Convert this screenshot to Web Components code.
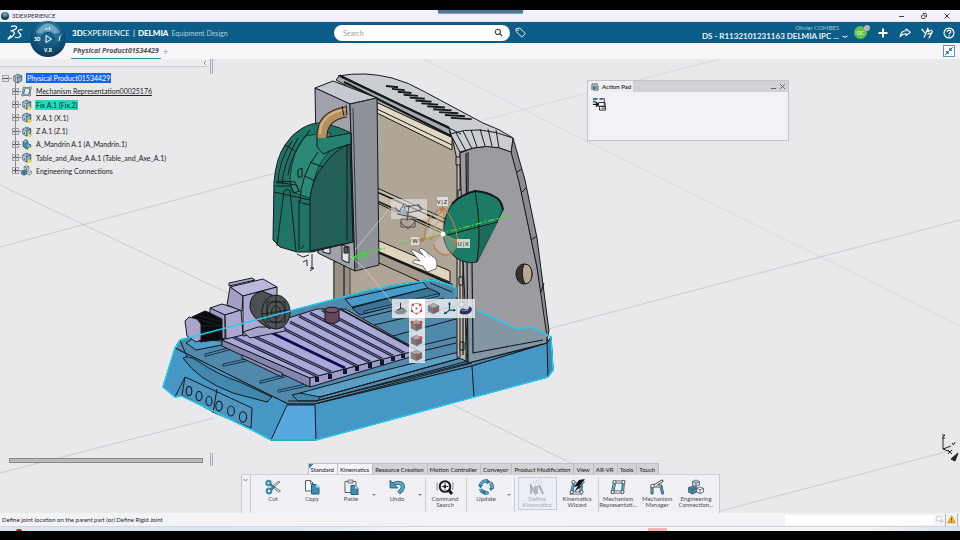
<!DOCTYPE html>
<html lang="en">
<head>
<meta charset="utf-8">
<title>3DEXPERIENCE</title>
<style>
html,body{margin:0;height:100%}
body{font-family:"Lato","Open Sans",sans-serif;background:#000;color:#333}
</style>
</head>
<body>
<app-shell>
  <title-bar slot="title"></title-bar>
  <top-bar slot="top"></top-bar>
  <doc-tabs slot="tabs">Physical Product01534429</doc-tabs>
  <scene-view slot="scene"></scene-view>
  <spec-tree slot="tree">
    <tree-item root selected icon="product">Physical Product01534429</tree-item>
    <tree-item icon="mech" underline>Mechanism Representation00025176</tree-item>
    <tree-item icon="part" active>Fix A.1 (Fix.2)</tree-item>
    <tree-item icon="part">X A.1 (X.1)</tree-item>
    <tree-item icon="part">Z A.1 (Z.1)</tree-item>
    <tree-item icon="body">A_Mandrin A.1 (A_Mandrin.1)</tree-item>
    <tree-item icon="part">Table_and_Axe_A A.1 (Table_and_Axe_A.1)</tree-item>
    <tree-item icon="conn">Engineering Connections</tree-item>
  </spec-tree>
  <context-toolbar slot="float"></context-toolbar>
  <action-pad slot="float"></action-pad>
  <ribbon-bar slot="ribbon"></ribbon-bar>
  <status-bar slot="status">Define joint location on the parent part (or) Define Rigid Joint</status-bar>
</app-shell>

<script>
const define = (name, css, html, init) => {
  const t = document.createElement('template');
  customElements.define(name, class extends HTMLElement {
    constructor() { super(); this.attachShadow({mode: 'open'}); }
    connectedCallback() {
      if (this.shadowRoot.childNodes.length) return;
      t.innerHTML = `<style>*{box-sizing:border-box}button{font:inherit;color:inherit;background:none;border:0;padding:0;margin:0;cursor:pointer}${css}</style>` +
        (typeof html === 'function' ? html(this) : html);
      this.shadowRoot.append(t.content.cloneNode(true));
      if (init) init(this);
    }
  });
};

const cube = (x, y, s, top, l, r) => `<path fill="${top}" d="M${x} ${y - s}l${s} ${s / 2}l${-s} ${s / 2}l${-s} ${-s / 2}z"/><path fill="${l}" d="M${x - s} ${y - s / 2}l${s} ${s / 2}v${s}l${-s} ${-s / 2}z"/><path fill="${r}" d="M${x + s} ${y - s / 2}l${-s} ${s / 2}v${s}l${s} ${-s / 2}z"/>`;
const graybox = dots => `<g stroke="#5b5d61" stroke-width=".5">${cube(8, 8, 6.500, '#a9abaf', '#7b7d81', '#66686c')}</g><g fill="#e5403c">${dots}</g>`;
const partBox = `<path d="M2.500 4.500L8 1.500l6 2.500v7l-6 3.500-5.500-3z" fill="#cfdfe8" stroke="#3f5360" stroke-width="1.100"/><path d="M8 7v7.500l6-3.500V4z" fill="#8fb0c2" stroke="#3f5360"/><path d="M2.500 4.500L8 7l6-3" fill="none" stroke="#3f5360"/><path d="M5 8.500v3.500M7 4.500l3-1.300" stroke="#2f86ab" stroke-width="2"/>`;
const frame = `<g fill="none" stroke="#47515a" stroke-width="3"><path d="M4.500 3h9l-1 10h-10z"/></g><g fill="none" stroke="#dfe9ee" stroke-width="1.300"><path d="M4.500 3h9l-1 10h-10z"/></g><path d="M5 4.500L3.500 12M13 4.500l-.7 7.500" stroke="#3a94b8" stroke-width="2"/><g fill="#fff" stroke="#47515a"><circle cx="4.500" cy="3" r="1.600"/><circle cx="13.500" cy="3" r="1.600"/><circle cx="12.500" cy="13" r="1.600"/><circle cx="2.700" cy="13" r="1.600"/></g>`;
const conn = `<g stroke="#46555f" stroke-width=".8"><path fill="#c6dae4" d="M8 1l3.500 1.500v3.500L8 7.500 4.500 6V2.500z"/><path fill="#3a8bad" d="M4.500 7l4 1.700v4.500l-4 1.800-4-1.800V8.700z"/><path fill="#fff" d="M12 8l3.500 1.400v3.600L12 14.500 8.700 13V9.400z"/><path fill="none" d="M4.500 2.500L8 4l3.500-1.500M8 4v3.500M.5 8.700l4 1.800 4-1.800M4.500 10.500V15M8.700 9.400l3.300 1.500 3.500-1.500M12 10.900v3.600"/></g>`;
const ICONS = {
  product: partBox,
  part: partBox + `<path d="M9 15l2.500-6 1.500 3.500h3l-2 2.500z" fill="#ffe92b" stroke="#a8a516" stroke-width=".5"/>`,
  body: `<path fill="#3a8bad" stroke="#27475a" d="M3 4l4-3 3 2v4l4 1v4l-5 3-6-4z"/><path fill="#a9cfe0" d="M4 4l3-2 2 1-3 2zM8 9l3-1 2 1-3 1.500z"/><path d="M10 15l2.500-5 1 2.500h2.500l-1 2.500z" fill="#ffe92b"/>`,
  mech: frame, conn,
  cut: `<g fill="none" stroke="#3e8db0" stroke-width="2.200"><circle cx="3.500" cy="4" r="2.100"/><circle cx="4" cy="12" r="2.300"/></g><path d="M5.500 5L15.500 12l-2 .8L5 6.500zM6 10.500L15 3l-1.800-.6L5.600 9z" fill="#dfe3e6" stroke="#5e6468" stroke-width=".8"/><path d="M5 5l4 3-3 3" fill="none" stroke="#2f7c9e" stroke-width="1.800"/>`,
  copy: `<path d="M1.500 1.500h5l2.500 2.500v8h-7.500z" fill="#f6f7f8" stroke="#5a5f63"/><path d="M6.500 1.500v3h2.500" fill="none" stroke="#5a5f63" stroke-width=".8"/><path d="M7.500 5.500h4.500l3 3v6.500h-7.500z" fill="#3e8db0" stroke="#23617e"/><path d="M12 5.500v3h3z" fill="#b6dbe9"/>`,
  paste: `<path d="M2 2.500h11v11h-11z" fill="#f0f1f2" stroke="#5a5f63"/><path d="M5 1h5v3h-5z" fill="#d8dadc" stroke="#5a5f63" stroke-width=".8"/><path d="M8 6.500h4l3 3v6h-7z" fill="#3e8db0" stroke="#23617e"/><path d="M12 6.500v3h3z" fill="#b6dbe9"/>`,
  undo: `<path d="M4 5.500c6-4 11-.5 9.500 4-.6 1.800-2 3-4 4.500" fill="none" stroke="#255f7b" stroke-width="4"/><path d="M4 5.500c6-4 11-.5 9.500 4-.6 1.800-2 3-4 4.500" fill="none" stroke="#5aa6c5" stroke-width="2.600"/><path d="M1 1v8h8z" fill="#4596b8" stroke="#255f7b" stroke-width=".8"/>`,
  search: `<circle cx="8" cy="7.500" r="5.300" fill="#fff" stroke="#17191b" stroke-width="2"/><path d="M12 11.500l3 3.500" stroke="#17191b" stroke-width="3"/><circle cx="8" cy="7.500" r="1.700" fill="#222"/><path d="M8 4v1.500M8 9.500V11M4.500 7.500H6M10 7.500h1.500" stroke="#222"/><path d="M1 4H0v7h1M15 4h1v6h-1" fill="none" stroke="#777" stroke-width=".8"/>`,
  update: `<g fill="none" stroke="#24607d" stroke-width="3.400"><path d="M2.500 10a6 6 0 0 0 8 3.500M14 9.500A6 6 0 0 0 12.500 4M9.500 2.200A6 6 0 0 0 2.300 6.500"/></g><g fill="none" stroke="#5aa9c9" stroke-width="2"><path d="M2.500 10a6 6 0 0 0 8 3.500M14 9.500A6 6 0 0 0 12.500 4M9.500 2.200A6 6 0 0 0 2.300 6.500"/></g><path d="M9 0l4 3-4.500 2.500zM7 16l-4-3 4.500-2.500zM0 6h5l-2.500 3.500zM11 9h5l-3 3z" fill="#2f7595"/>`,
  define: `<g stroke="#a9abb0" fill="none"><path d="M2 15V7l4 7V7M8 15V7" stroke-width="1.700"/><path d="M10 6l4 9" stroke-width="2"/><path d="M4 3h1M7 2h1M10 1h1M12 3h1M6 5h1M9 4h1" stroke-width="1.200"/></g>`,
  wizard: frame.replaceAll('M4.500 3h9l-1 10h-10z', 'M4.500 5h8l-1 9h-9z') + `<path d="M16 0l-6 1-5 7 4-1-4 6 8-6-3 .5z" fill="#111"/>`,
  manager: `<g stroke="#4c565e" stroke-width="3" stroke-linecap="round"><path d="M3 7h9M3 7v7M12 7l1.500 7M5 7l8-5"/></g><g stroke="#e9eff2" stroke-width="1.200"><path d="M3 7h9M5 7l8-5"/></g><path d="M3.200 8v6M12.200 8l1.200 6" stroke="#3a94b8" stroke-width="2.200"/><circle cx="3.500" cy="7" r="1.800" fill="#fff" stroke="#4c565e"/>`,
  ground: `<path d="M0 12l5-3h9l2 3-5 3H4z" fill="#8b8d91"/><path d="M8 1v8M8 7l5 2M8 8l-4 2" stroke="#333" stroke-width="1.200" fill="none"/>`,
  circle: `<circle cx="8" cy="8" r="6.200" fill="none" stroke="#9c5f62" stroke-width=".9"/><g fill="#e5403c"><circle cx="3.500" cy="3.500" r="1.600"/><circle cx="12.500" cy="3.500" r="1.600"/><circle cx="2.500" cy="11" r="1.600"/><circle cx="13.500" cy="11" r="1.600"/><circle cx="8" cy="14.200" r="1.300"/></g><circle cx="8" cy="8" r="1.300" fill="#2f62a5"/>`,
  box1: graybox('<circle cx="12" cy="9" r="1.500"/>'),
  box2: graybox('<circle cx="2.500" cy="4" r="1.700"/><circle cx="13.500" cy="4" r="1.700"/><circle cx="8" cy="6.500" r="1.700"/>'),
  box3: graybox('<circle cx="13.500" cy="4.500" r="1.700"/><circle cx="8" cy="8" r="1.700"/>'),
  box4: graybox('<circle cx="8" cy="7" r="1.900"/>'),
  axis: `<path d="M8 1v9M8 10h6M8 10l-5 4" stroke="#0e4b5b" stroke-width="1.500" fill="none"/><path d="M8 0l2 3H6zM16 10l-3-2v4zM1 15.500l1-4 3 2.500z" fill="#0e4b5b"/>`,
  swirl: `<circle cx="3" cy="3" r="3.500" fill="#e6e6e8" stroke="#9a9a9e" stroke-width=".7"/><path d="M1 11c2-4 5-3 7-2s5-1 5-4c3 2 4 5 1 8s-9 3-13 1z" fill="#23315e"/><path d="M3 11c3-2 6 1 9-2" stroke="#8fa5e0" stroke-width="1.200" fill="none"/>`,
  plus: `<path d="M8 2v12M2 8h12" stroke="#fff" stroke-width="2.600"/>`,
  share: `<path d="M9.500 2.500L15 7l-5.500 4.500V9C6 9 3.500 10 1.500 13c.5-4.500 3-8 8-8z" fill="none" stroke="#fff" stroke-width="1.400" stroke-linejoin="round"/>`,
  share2: `<g fill="none" stroke="#fff" stroke-width="1.700"><path d="M1 2.500l4 5.500M9.500 1L4 14M8 6l7-2M15.500 5.500L10.500 15M8.500 9.500l6-1.500M9 3l1.500 4"/></g>`,
  help: `<circle cx="8" cy="8" r="6.600" fill="none" stroke="#fff" stroke-width="1.600"/><path d="M5.700 6.500c0-3 4.600-3 4.600-.3 0 1.800-2.300 1.700-2.300 3.500M8 11v1.500" fill="none" stroke="#fff" stroke-width="1.600"/>`,
  tag: `<path d="M1.500 2.500l5.500-1 8 8.200-5.200 5-8-8z" fill="none" stroke="#fff" stroke-width="1.300" stroke-linejoin="round"/><circle cx="4.500" cy="4.800" r="1.100" fill="#fff"/>`,
  lens: `<circle cx="6.800" cy="6.800" r="4.600" fill="none" stroke="#33383c" stroke-width="1.800"/><path d="M10 10l4.500 4.500" stroke="#33383c" stroke-width="2.200"/>`,
  shrink: `<path d="M8.500 7.500V2.500l2 2L13.500 1.500l1 1L11.500 5.500l2 2zM7.500 8.500v5l-2-2-3 3-1-1 3-3-2-2z" fill="#16557a"/>`,
  pad: `<path d="M1 3h5M8 3h4M1 6h3" stroke="#256a98" stroke-width="1.800"/><path d="M1 9h5M4 6.500L7 9l-3 2.500" stroke="#111" stroke-width="1.400" fill="none"/><g fill="#fff" stroke="#222" stroke-width="1"><path d="M7 7h7v4H7zM8 11h6.500v4H8z"/></g><path d="M13 2v10M10 13h4" stroke="#333"/>`,
  padtab: `<path d="M2 2h12M2 2v12M5 6h9v8H5z" fill="none" stroke="#3a4e5c" stroke-width="1.800"/><path d="M6 8h6v4H6z" fill="#4c8cab"/>`,
  warn: `<path d="M8 1l7 13H1z" fill="#f5b62b" stroke="#b07d12"/><path d="M8 5v5M8 11v2" stroke="#7a4f00" stroke-width="1.500"/>`,
  term: `<path d="M3 3h8v7H3z" fill="#fff" stroke="#b6b6ba"/><path d="M9 12h5v-3" fill="none" stroke="#9d9da2"/>`
};
define('ds-icon', ':host{display:block;width:10px;height:10px;flex:none}svg{display:block;width:100%;height:100%;overflow:visible}',
  el => `<svg viewBox="0 0 16 16" aria-hidden="true">${ICONS[el.getAttribute('name')] || ''}</svg>`);

define('app-shell', `
:host{display:flex;flex-direction:column;min-height:100vh;background:#e9e8eb}
.cap{height:10px;background:#000;flex:none}.foot{height:9px;background:#000;flex:none}
.main{position:relative;flex:1;display:flex;flex-direction:column;justify-content:space-between;align-items:flex-start;min-height:454px}
.scene{position:absolute;inset:0;overflow:hidden}
.tree{position:relative;align-self:flex-start;display:flex;flex-direction:column;height:404px}
.rib{position:relative;align-self:center}
.edge{height:5px;flex:none;background:linear-gradient(90deg,#dbe3ec,#dde7f2 30%,#f5f5f8 45%,#f3f3f6 90%,#d9e2ea);border-top:1px solid #d3d6dc;display:flex;align-items:end}
.edge i{width:6px;height:2px;background:#b02036;border-radius:3px 3px 0 0;margin-left:16px}
.edge b{width:19px;height:3px;background:#efb2b8;margin-left:auto;margin-right:293px}
`, `<div class="cap"></div><slot name="title"></slot><slot name="top"></slot><slot name="tabs"></slot>
<div class="main"><div class="scene"><slot name="scene"></slot><slot name="float"></slot></div>
<div class="tree"><slot name="tree"></slot></div><div class="rib"><slot name="ribbon"></slot></div></div>
<slot name="status"></slot><div class="edge"><i></i><b></b></div><div class="foot"></div>`);

define('title-bar', `
:host{box-sizing:border-box;display:grid;grid-template-columns:1fr auto 1fr;height:12px;flex:none;background:#f1f2fb;font-size:6px;color:#2a2a30;align-items:center;border-bottom:1px solid #dfe1ec}
.n{display:flex;align-items:center;gap:3px;padding-left:1px}.n i{width:8px;height:8px;border-radius:50%;background:radial-gradient(circle at 50% 30%,#8bb7cf,#0b3d5c 60%)}
.notch{width:85px;height:3px;background:#47799d;align-self:start;border-radius:0 0 1px 1px;box-shadow:0 1px 1px #8a9bb0}
.w{display:flex;justify-content:flex-end;gap:15px;padding-right:9px}.w button{width:8px;height:8px}.w svg{display:block;width:8px;height:8px;fill:none;stroke:#444}`,
`<div class="n"><i></i><span>3DEXPERIENCE</span></div><div class="notch"></div><div class="w">
<button aria-label="Minimize"><svg viewBox="0 0 8 8"><path d="M2 4.500h5"/></svg></button>
<button aria-label="Restore"><svg viewBox="0 0 8 8"><rect x="1.500" y="3" width="3.500" height="3.500" rx="1"/><path d="M3 1.500h2.500q1 0 1 1V5"/></svg></button>
<button aria-label="Close"><svg viewBox="0 0 8 8"><path d="M1.500 1.500l5 5M6.500 1.500l-5 5"/></svg></button></div>`);

define('top-bar', `
:host{display:flex;align-items:center;height:21px;flex:none;background:#0b5c86;color:#fff;position:relative;z-index:2;font-family:"Lato",sans-serif}
.logo{width:16px;height:16px;margin-left:7px}.compass{position:absolute;left:29px;top:-2px;width:38px;height:38px}
.brand{margin-left:49px;font-size:7px;display:flex;align-items:baseline;gap:3px;white-space:nowrap}
.brand>span,.brand>b{font-size:8px}.brand b{font-weight:900}.brand em{font-style:normal;color:#b5d0de}
.find{position:absolute;left:334px;width:176px;height:16px;background:#fff;border-radius:8px;display:flex;align-items:center;padding:0 7px 0 9px}
.find input{flex:1;min-width:0;border:0;outline:0;background:none;padding:0;font:7px "Lato",sans-serif;color:#444}.find input::placeholder{color:#9a9ea4}
.find ds-icon{width:9px;height:9px}.tag{position:absolute;left:515px}.tag ds-icon{width:11px;height:11px}
.r{margin-left:auto;display:flex;align-items:center;padding-right:5px}
.who{text-align:right;line-height:1;display:flex;flex-direction:column;gap:1px}.who small{font-size:6px;color:#a9c8d8}.who span{font:bold 8px/1 "Lato",sans-serif;color:#e9f2f6}
.chev{width:6px;height:4px;margin:8px 6px 0 3px}.av{position:relative;width:13px;height:13px;border-radius:50%;background:#5cc44a;font-size:5px;display:grid;place-items:center;margin-right:10px}
.av i{position:absolute;right:-3px;top:-1px;width:6px;height:6px;border-radius:50%;background:#b9b4bf}
.ic{display:flex;gap:10px}.ic ds-icon{width:12px;height:12px}`,
`<svg class="logo" viewBox="0 0 16 16" fill="none" stroke="#fff" stroke-width="1.300"><path d="M4 1.500C7 .7 10.500 1 9.500 3 8.800 4.500 6 5.500 3.500 6M5.500 6.500C9 7 7.500 11 1.500 14c-.8 0 0-1.500 2.500-3.500"/><path d="M15.500 5c-2.500-1-5 .3-4 2s4 3.200 1 5c-1.500.8-3.500.6-4.500 0"/></svg>
<svg class="compass" viewBox="0 0 38 38"><defs><radialGradient id="g" cx=".5" cy=".3" r=".75"><stop offset="0" stop-color="#4f9cc2"/><stop offset=".6" stop-color="#0d5178"/><stop offset="1" stop-color="#0a3654"/></radialGradient></defs><circle cx="19" cy="19" r="18" fill="url(#g)"/><path d="M7 12Q19-5 31 12 26 15 24 12 19 8 14 12 11 15 7 12" fill="#8fbdd4" opacity=".65"/><circle cx="19" cy="19" r="6.500" fill="#18638c" stroke="#0b4468"/><path d="M17 15.500l5.500 3.500-5.500 3.500z" fill="none" stroke="#fff" stroke-width="1"/><g font-family="Open Sans,sans-serif" font-weight="700" font-size="5" fill="#fff"><text x="5" y="21">3D</text><text x="15" y="32">V.R</text></g><path d="M17 8l1 2M21 7l-1 3M30 21l1-5M31.500 15h.8" stroke="#fff"/></svg>
<div class="brand"><span><b>3D</b>EXPERIENCE</span><span>|</span><b>DELMIA</b><em>Equipment Design</em></div>
<label class="find"><input type="search" placeholder="Search" aria-label="Search"><ds-icon name="lens"></ds-icon></label>
<button class="tag" aria-label="Tags"><ds-icon name="tag"></ds-icon></button>
<div class="r"><div class="who"><small>Olivier COMBES</small><span>DS - R1132101231163 DELMIA IPC ...</span></div>
<svg class="chev" viewBox="0 0 6 4" fill="none" stroke="#fff"><path d="M.5 1q2.500 2.500 5 0"/></svg>
<div class="av">OC<i></i></div><div class="ic"><button aria-label="Add"><ds-icon name="plus"></ds-icon></button><button aria-label="Share"><ds-icon name="share"></ds-icon></button><button aria-label="Content"><ds-icon name="share2"></ds-icon></button><button aria-label="Help"><ds-icon name="help"></ds-icon></button></div></div>`);

define('doc-tabs', `
:host{box-sizing:border-box;display:flex;align-items:stretch;height:16px;flex:none;background:#f7f7fa;padding:0 5px 0 71px;font-size:7px}
.t{font:italic 700 7px "Open Sans",sans-serif;color:#505256;border-bottom:1px solid #3183b0;padding:0 2px;white-space:nowrap}
.p{color:#999;font-size:10px;line-height:10px;margin-left:2px}.x{margin:2px 0 2px auto;width:12px;height:12px;border:1px solid #5a93b5;background:#fff;display:grid;place-items:center}`,
`<button class="t"><slot></slot></button><button class="p" aria-label="New tab">+</button><button class="x" aria-label="Collapse"><ds-icon name="shrink"></ds-icon></button>`);

define('spec-tree', `
:host{display:flex;flex-direction:column;flex:1;width:213px;font-size:7px;color:#222}
.h{height:8px;display:flex;justify-content:space-between;border-bottom:1px solid #cdccd1;background:#eeedf0;width:209px;padding-right:2px}
.h svg{width:4px;height:6px;margin-left:auto;margin-top:1px}
.row{display:flex;justify-content:space-between;flex:1}
.list{display:flex;flex-direction:column;justify-content:space-between;height:105px;margin-top:5px}
.bars{width:3px;display:flex;flex-direction:column;justify-content:space-between}.bars i{height:13px;border:solid #aaa9af;border-width:0 1px}.bars i:first-child{margin-top:-8px;height:15px}
.sb{height:5px;margin:-8px 10px 0 9px;background:#bbb;border:1px solid #88888c}`,
`<div class="h"><svg viewBox="0 0 4 6" fill="none" stroke="#777" stroke-width=".8"><path d="M3 1L1 3l2 2"/></svg></div>
<div class="row"><div class="list" role="tree"><slot></slot></div><div class="bars"><i></i><i></i></div></div><div class="sb"></div>`);

define('tree-item', `
:host{display:flex;align-items:center;height:12px;padding-left:12px;position:relative;white-space:nowrap}
:host([root]){padding-left:2px}
:host(:not([root]))::before{content:"";position:absolute;left:15px;top:-8px;height:14px;border-left:1px solid #8b8b90}
.e{position:relative;width:7px;height:7px;background:#e2e1e5;border:1px solid #a2a2a7;display:grid;place-items:center}
.e::before{content:"";grid-area:1/1;width:5px;height:1px;background:#555}:host(:not([root])) .e::after{content:"";grid-area:1/1;width:1px;height:5px;background:#555}
.d{width:2px;height:1px;background:#8b8b90}:host([root]) .d{width:3px}
ds-icon{width:11px;height:11px}.l{margin-left:3px;padding:0 1px;line-height:10px}
:host([selected]) .l{background:#1463f0;color:#fff}:host([active]) .l{background:#1fdcc0}:host([underline]) .l{text-decoration:underline;text-underline-offset:1px}`,
el => `<button class="e" aria-label="Expand"></button><i class="d"></i><ds-icon name="${el.getAttribute('icon')}"></ds-icon><span class="l"><slot></slot></span>`);

define('context-toolbar', `
:host{position:absolute;left:40.800%;top:52.900%;display:block;width:83px}
.h,.v{display:flex;background:rgba(240,240,244,.82);box-shadow:0 0 1px #777}.h{justify-content:space-around;padding:0 1px}
.v{flex-direction:column;width:16px;margin-left:17px}button{width:16px;height:19px;display:grid;place-items:center}.on{background:#fff}.v button{height:15px}
ds-icon{width:13px;height:13px}`,
`<div class="h"><button aria-label="Ground"><ds-icon name="ground"></ds-icon></button><button class="on" aria-label="Centre"><ds-icon name="circle"></ds-icon></button><button aria-label="Box"><ds-icon name="box1"></ds-icon></button><button aria-label="Axis"><ds-icon name="axis"></ds-icon></button><button aria-label="Orient"><ds-icon name="swirl"></ds-icon></button></div>
<div class="v"><button aria-label="Corners"><ds-icon name="box2"></ds-icon></button><button aria-label="Edge"><ds-icon name="box3"></ds-icon></button><button aria-label="Face"><ds-icon name="box4"></ds-icon></button></div>`);

define('action-pad', `
:host{box-sizing:border-box;position:absolute;right:171px;top:21px;width:202px;display:flex;flex-direction:column;background:#f3f1f6;border:1px solid #c3c3c8;font-size:6px;color:#333}
.h{display:flex;align-items:center;height:11px;background:#d2d2d6;padding-right:2px}
.t{display:flex;align-items:center;gap:3px;background:#efeef2;align-self:stretch;padding:0 2px 0 3px;font-weight:bold}.t ds-icon{width:8px;height:8px}
.w{margin-left:auto;display:flex;gap:2px}.w svg{display:block;width:7px;height:7px;fill:none;stroke:#666}
.b{padding:4px;height:48px}.b ds-icon{width:15px;height:15px}`,
`<div class="h"><span class="t"><ds-icon name="padtab"></ds-icon>Action Pad</span><span class="w"><button aria-label="Minimize"><svg viewBox="0 0 7 7"><path d="M1 5.500h5"/></svg></button><button aria-label="Close"><svg viewBox="0 0 7 7"><path d="M1 1l5 5M6 1L1 6"/></svg></button></span></div>
<div class="b"><button aria-label="Mechanism action"><ds-icon name="pad"></ds-icon></button></div>`);

define('ribbon-tool', `
:host{display:flex;flex:0 0 39px}
button{flex:1;display:flex;flex-direction:column;align-items:center;gap:1px;font-size:6px;line-height:6px;color:#4b4d51;padding-top:2px;height:33px}
ds-icon{width:16px;height:16px}span{text-align:center}:host([off]) button{color:#a8a9ae;border:1px solid #c5cbdb;background:#eceef5;padding-top:1px}`,
el => `<button ${el.hasAttribute('off') ? 'disabled' : ''}><ds-icon name="${el.getAttribute('icon')}"></ds-icon><span><slot></slot></span></button>`);

define('ribbon-bar', `
:host{display:flex;flex-direction:column;width:479px;max-width:100%;font-size:6px}
.tabs{display:flex;margin-left:67px;height:11px;align-self:flex-start}
.tabs button{padding:0 3px 0 2px;background:#d4d4d7;border:solid #bdbdc2;border-width:1px 1px 0 0;color:#26282b;white-space:nowrap;font-size:6px;font-weight:500}
.tabs .a{background:#f4f3f7}.tabs button:first-child{border-left:1px solid #bdbdc2;background:linear-gradient(135deg,#2c7db0 3px,#f4f3f7 3px)}
.body{display:flex;background:#f1f0f4;border-top:1px solid #d0d0d5;height:39px;padding-top:2px;border-right:1px solid #c7c7cc}
.c{width:10px;border:solid #c7c7cc;border-width:0 1px;display:grid;justify-items:center;align-items:start;margin-right:3px;margin-top:-2px}.c svg{width:5px;height:4px;margin-top:3px}
.s{width:1px;background:#cbcbd0;margin:1px 0 1px 1px}.d{width:7px;display:grid;place-items:center}.d::after{content:"";border:2px solid transparent;border-top-color:#888;margin-top:2px}.g{display:flex;margin:0 1px 0 3px}`,
`<div class="tabs" role="tablist">${['Standard', 'Kinematics', 'Resource Creation', 'Motion Controller', 'Conveyor', 'Product Modification', 'View', 'AR-VR', 'Tools', 'Touch'].map((t, i) => `<button role="tab" class="${i < 2 ? 'a' : ''}">${t}</button>`).join('')}</div>
<div class="body"><button class="c" aria-label="More"><svg viewBox="0 0 5 4" fill="none" stroke="#777" stroke-width=".8"><path d="M.5 1l2 2 2-2"/></svg></button>
<ribbon-tool icon="cut">Cut</ribbon-tool><ribbon-tool icon="copy">Copy</ribbon-tool><ribbon-tool icon="paste">Paste</ribbon-tool><button class="d" aria-label="Paste options"></button>
<ribbon-tool icon="undo">Undo</ribbon-tool><button class="d" aria-label="Undo options"></button><i class="s"></i>
<ribbon-tool icon="search">Command<br>Search</ribbon-tool><i class="s"></i><ribbon-tool icon="update">Update</ribbon-tool><button class="d" aria-label="Update options"></button><i class="s"></i>
<div class="g"><ribbon-tool icon="define" off>Define<br>Kinematics</ribbon-tool></div><ribbon-tool icon="wizard">Kinematics<br>Wizard</ribbon-tool><i class="s"></i>
<ribbon-tool icon="mech">Mechanism<br>Representati...</ribbon-tool><ribbon-tool icon="manager">Mechanism<br>Manager</ribbon-tool><ribbon-tool icon="conn">Engineering<br>Connection...</ribbon-tool></div>`);

define('status-bar', `
:host{box-sizing:border-box;display:flex;align-items:center;height:13px;flex:none;background:#f3f2f5;padding:0 2px;font-size:6px;color:#26282b}
input{margin-left:auto;width:149px;height:10px;border:0;background:#fff;padding:0 2px;font:6px "Lato",sans-serif}
button{width:12px;height:12px;display:grid;place-items:center;border-right:1px solid #b5b5ba}ds-icon{width:9px;height:9px}`,
`<span><slot></slot></span><input aria-label="Command"><button aria-label="Console"><ds-icon name="term"></ds-icon></button><button aria-label="Warnings"><ds-icon name="warn"></ds-icon></button>`);

const rail = (x1, y1, x2, y2) => `<path d="M${x1} ${y1}L${x2} ${y2}" stroke="#11162c" stroke-width="3"/><path d="M${x1} ${y1}L${x2} ${y2}" stroke="#767ea0" stroke-width="1"/>`;
const slot = (x1, y1, x2, y2) => `<path d="M${x1} ${y1}L${x2} ${y2}" stroke="#0b2434" stroke-width="3.200" stroke-linecap="round"/><path d="M${x1} ${y1}L${x2} ${y2}" stroke="#4b84a4" stroke-width="1.600" stroke-linecap="round"/>`;
const vents = Array.from({length: 12}, (_, i) => `M${386 + 5.900 * i} ${86 + 2.900 * i}l${12 + i * 0.800} 1.200`).join('');
define('scene-view', ':host{position:absolute;inset:0;display:block}svg{display:block;width:100%;height:100%}', `
<svg viewBox="0 59 960 454" preserveAspectRatio="xMidYMid slice" role="img" aria-label="Milling machine model">
<g fill="none" stroke="#c4c3c7" stroke-width=".8">
<path d="M0 473L214 418M0 247L276 173M0 185L232 295M453 405L577 466M720 511L953 450M548 329L960 220" /><path d="M483 120L720 59M423 59L570 133 960 326" stroke="#d6d5d9"/></g>
<g stroke="#15181b" stroke-width="1" stroke-linejoin="round">
<!-- back wall -->
<path fill="#b0a698" d="M334 190L377 100 452 137 464 153 466 362 455 356 334 300z"/>
<path fill="#9a9183" d="M334 262h10v50l-10-4zM344 265h6v40h-6z" stroke-width=".7"/>
<path fill="#e2d8c4" d="M377 102L452 137V150L377 113z"/><path d="M377 109L452 145" fill="none"/>
<path fill="#c9bda8" d="M377 188L459 225V241L377 203z"/><path d="M377 192L459 229" stroke-width="1.800" fill="none"/><path d="M377 201L459 238" fill="none" stroke-width="1.800"/>
<path fill="#e0d5bd" d="M377 240L450 271V282L377 251z"/><path fill="#a4998a" d="M377 251L452 284V296L377 262z"/><path d="M377 252L450 284" fill="none" stroke-width="1.800"/>
<!-- base deck -->
<path fill="#5089ab" d="M180 340L370 290 397 285 432 280 447 284 456 288V297L470 300 548 332 547 343 472 366 315 404 288 404 175 348z"/>
<path fill="#459ccb" d="M345 299L423 282 428 288 352 307z"/><path fill="#3b7494" d="M428 288L437 292 440 294 360 315 352 308z"/>
<g fill="none"><path d="M362 318L444 298M374 325L456 306M393 336L456 319M410 348L456 337M418 352L456 343M430 283l22 9"/></g>
${slot(365, 312, 438, 295)}
<path fill="#4797c6" d="M175 348L288 404H315L472 366 547 343 551 337 553 370 548 377 474 397 316 440H271L250 429 182 396 175 397 163 387z"/>
<path fill="#56a8df" d="M287 405H315L316 440H271z"/><path fill="#3e86b0" d="M547 343l4-6 2 33-5 7z"/>
<path fill="#4487ad" d="M183 358Q188 355 196 360 220 376 240 382L272 397 267 402 233 393Q198 380 183 358z"/>
<path fill="#5294bd" d="M185 377L252 408 251 428 215 413 182 395z"/><path d="M217 389L213 413M185 377L175 397M472 366L474 397M175 348L180 340 187 357" fill="none"/>
<g fill="#4797c6" stroke-width="1.100"><ellipse cx="189" cy="391" rx="2.800" ry="4.500"/><ellipse cx="199" cy="396" rx="3" ry="4.600"/><ellipse cx="209" cy="401" rx="3" ry="4.700"/><ellipse cx="219" cy="406" rx="3.200" ry="4.900"/><ellipse cx="231" cy="411" rx="3.400" ry="5"/><ellipse cx="243" cy="417" rx="3.600" ry="5.200"/></g>
${slot(206, 355, 232, 348)}${slot(224, 365, 250, 359)}${slot(261, 382, 284, 376)}${slot(279, 391, 307, 385)}
<path fill="#4f9dc9" d="M186 343L192 339 222 341V345L196 350z"/>
<path fill="#5a9fc6" d="M300 393L370 374 463 351 468 356 320 397 298 397z"/><path fill="#3f87b0" d="M292 395l8-2 20 4-2 4H298z"/><path d="M320 400L472 360M318 403L472 363M320 397L468 356M288 401h28L472 362" fill="none"/>
<!-- slotted table -->
<path fill="#8585b2" d="M222 340L310 378V387L222 346z"/><path fill="#9c9dcb" d="M310 378L410 352V357L310 387z"/>
<path fill="#a9a9d8" d="M222 340L250 330 317 309 345 309 418 350 310 378z"/>
${rail(233, 337, 317, 376)}${rail(249, 334, 331, 372)}<path d="M270 332L345 368" stroke="#0c0c55" stroke-width="3"/>${rail(282, 328, 357, 366)}${rail(290, 322, 370, 362)}${rail(299, 316, 382, 359)}${rail(310, 313, 393, 356)}${rail(322, 310, 404, 353)}<path d="M340 309L416 350" fill="none" stroke-width="1.600"/>
<g fill="#111530" stroke="none"><path d="M315 377h4v5h-4zM328 374h4v5h-4zM343 369h4v5h-4zM355 366h4v5h-4zM368 363h4v5h-4zM380 360h4v5h-4zM391 357h4v4h-4zM401 354h4v4h-4z"/></g>
<path fill="#8c8cb8" d="M242 355l40 18v4l-40-19z"/>
<!-- motor and rotary axis -->
<path fill="#0b0c0e" d="M192 317L205 311 224 318V339L200 342z"/><path d="M196 315l26 7M198 319l25 7M201 326h21M201 332h21" stroke="#2a2b30" stroke-width=".6"/>
<path fill="#a9a5cb" d="M185 321L189 317 197 319 201 324V340L196 342 187 336z"/>
<path fill="#b3afd8" d="M210 308L222 304 241 310 225 315z"/><path fill="#a19dc4" d="M210 308L225 315V339L222 338V319L210 313z"/><path fill="#aca8d2" d="M225 315L241 310 243 335 226 339z"/>
<path fill="#bbb7df" d="M230 287L263 279 277 287 243 296z"/><path fill="#a29ec6" d="M230 287L243 296 242 311 227 305z"/><path fill="#aeaad4" d="M243 296L277 287V318L262 333 243 336z"/><path fill="#aaa6ce" d="M229 286v-3l23-5 3 2z"/>
<path fill="#a8a4cc" d="M243 332L258 327 285 327V331L250 338z"/>
<path fill="#4d4f51" d="M262 291Q249 294 250 308 252 319 270 329L277 297z"/><ellipse cx="276" cy="312" rx="14" ry="17" fill="#505356"/><g fill="none" stroke-width=".8"><ellipse cx="276" cy="312" rx="9" ry="11"/><ellipse cx="276" cy="312" rx="4.500" ry="6"/><path d="M276 295v34M262 314l28-4M267 302h18v20h-18z"/></g>
<path fill="#664459" d="M325 310V321Q332 326 339 321V310z"/><ellipse cx="332" cy="310" rx="7" ry="2.800" fill="#7b5268"/>
<path d="M180 340L370 290" stroke="#22cdf0" stroke-width="1.500"/>
<!-- right upright -->
<path fill="#c1b9a9" d="M452 137L464 153 466 361 457 357V160z"/><path d="M460 148V357" fill="none"/><path fill="#b8ae9c" d="M456 157h5v8h-5zM458 190h4v8h-4zM459 277h4v8h-4zM460 342h4v8h-4z"/>
<path fill="#9c9ca0" d="M460 153Q487 140 512 152L519 180 537 267 548 334 547 343 468 363 463 262z"/>
<path fill="#8b8b90" d="M511 152L513 138 525 180 537 238 549 331 547 337 537 267 519 182z"/><path d="M521 193l6-6M531 240l6-4M541 292l3-9M517 172l5-3" fill="none"/>
<path fill="#8296a3" d="M467 304L477 310 517 329 532 327 548 334 547 343 468 363z" stroke="none"/>
<path fill="none" d="M468 152V250M472 262L473 353 543 340M466 153L468 363 547 343M463 262V355M547 337V343" stroke-width="1.200"/>
<ellipse cx="524" cy="274" rx="8" ry="10" fill="#38342e"/><path fill="#b7aa95" d="M524 264Q532 264 532 274 532 283 525 284 520 274 524 264z"/>
<!-- roof -->
<path fill="#cccdd2" d="M338 76Q365 71 392 78 408 82 425 92L483 123Q500 129 513 138L511 152Q488 141 460 152L451 135 449 127z"/>
<path fill="#a8aab0" d="M336 80L340 75 449 128 451 137 378 103z"/><path d="M340 76L449 128M344 82L451 136" stroke-width="2" fill="none"/>
<path d="M450 134Q478 124 513 138M456 133l10 18M463 131l9 18M471 130l6 17M480 129l5 17M488 129l4 17M496 130l3 18M449 128l12 6" fill="none"/><path d="${vents}" stroke-width="1.900" fill="none"/>
<!-- spindle column -->
<path fill="#c6c9cf" d="M315 88L333 81 377 98 350 104z"/><path fill="#a1a2ab" d="M315 88L350 104 355 271 318 253z"/><path fill="#8f9298" d="M350 104L377 98 379 265 355 271z"/><path d="M353 108L357 268" fill="none" stroke-width=".7"/>
<path fill="#e4e4e8" d="M342 245l7 2v16l-7-3zM323 247l7-2v9l-7-2z"/><path d="M344 247h4v6h-4z" fill="#555"/>
<!-- spindle head -->
<path fill="#1f7565" d="M273 240L274 182Q276 158 285 145 292 134 301 129 312 122 323 123L340 128 351 133 353 242 312 252 297 252 280 247z"/>
<path fill="#2a8a76" d="M290 178Q292 152 305 136L330 132 334 148Q316 160 310 198L292 192z" stroke-width=".7"/>
<path fill="#215f57" d="M310 251V198Q312 180 323 166 336 148 350 144L353 242z"/>
<path fill="#258270" d="M317 137h12l22-4v11Q334 148 323 154L317 147z"/>
<g fill="none"><path d="M278 184Q278 162 292 141M282 184Q283 164 298 138M288 175Q290 155 310 130M300 204Q300 175 318 152M276 182l20 3 4 7M276 186h15l3 7 5-2-4-9-17-1M274 192l36 8M299 200v50M277 246l7-55q3-3 6 0l6 60M298 170l4-2v9h-4zM310 162l13 5M305 176l10 5M285 145l10 6M347 144v97M302 203l8 2"/></g>
<path d="M322 138Q321 116 346 112" fill="none" stroke="#2b2218" stroke-width="11"/><path d="M322 138Q321 116 346 112" fill="none" stroke="#b48f62" stroke-width="9"/><path d="M320 134Q320 114 346 109" fill="none" stroke="#d4b384" stroke-width="2"/><path d="M342 106l2 10M346 105l1 10" fill="none"/>
<path d="M297 254l6 3 6-2M303 262l4-2v6M312 254v15M310 268h4l-4 3M301 249l3-4" fill="none" stroke-width=".9"/>
<!-- green door -->
<path fill="#1b7b64" d="M503 210Q502 202 497 198 488 192 475 191 460 195 452 204 444 216 443 233 444 245 450 252 456 259 462 261 470 264 477 262z"/><path fill="#1b6a5a" d="M479 229L498 222 477 262z" stroke="none"/><path d="M475 191Q482 228 477 262M444 236Q470 229 498 222" fill="none"/><path d="M503 210Q502 202 497 198 488 192 475 191 460 195 452 204" fill="none" stroke-width="2"/>
</g>
<path fill="none" stroke="#22cdf0" stroke-width="1.500" d="M180 340L175 348 163 387 175 397 182 396 250 429 271 440H316L474 397 548 377 553 370 551 337 532 327 517 329 477 310M456 297V288L447 284 432 280 397 285 370 290"/>
<path d="M350 258L385 248M400 244L512 215" stroke="#35e22e" stroke-width="1.200" stroke-dasharray="7 2 2 2" fill="none"/><path d="M352 258l13-6v6zM360 252l5 3" fill="none" stroke="#35e22e" stroke-width="1.200"/>
<path d="M350 256l14 12 36 44M355 250l35-42" stroke="#d7d7db" stroke-width=".7" fill="none"/>
<g fill="none" stroke="#bd7c45" stroke-width="1.300" opacity=".85"><path d="M442 208Q426 214 424 239M444 208Q455 220 458 240Q455 256 444 255 436 253 433 244M442 209l-11 31M422 240l21-6 13 7M443 210v23"/><path d="M443 212Q430 218 426 238L443 234z" fill="#e2d2bd" opacity=".5" stroke="none"/><path d="M443 234L457 240Q455 255 444 254 437 252 434 243z" fill="#e2d2bd" opacity=".4" stroke="none"/></g><g fill="#bd7c45"><path d="M442 205l3 5h-5z"/><circle cx="422" cy="240" r="2.300"/><circle cx="456" cy="241" r="2.300"/></g>
<circle cx="443" cy="234" r="2.500" fill="#fff"/>
<path d="M391 199h36v20h-36z" fill="#e7e4e2" opacity=".62"/><g fill="none" stroke="#3b3b3e" stroke-width=".8"><path d="M395 207l4 5 5-8M404 207l14-2 3 5-14 3zM401 219h14v8h-14zM400 222l8 7 8-8M409 205l-2 16M397 214l20 4M418 204l5 6"/></g><circle cx="404" cy="211" r="2.500" fill="#8cb8da"/>
<g fill="#eae6e0" opacity=".85"><path d="M437 197h11v9h-11zM411 237h8v8h-8zM457 239h13v9h-13z"/></g>
<g font-family="Open Sans,sans-serif" font-size="6" font-weight="600" fill="#3c3c3e" text-anchor="middle"><text x="442" y="204">V|Z</text><text x="415" y="243">W</text><text x="463" y="246">U|X</text></g>
<path d="M411 251q0-2 3-1l9 5-4-5q1-3 4-1l9 7q5 2 5 9l-1 4-9 3-4-6-10-3q-1-3 3-3l4 1z" fill="#fff" stroke="#3a3a3c" stroke-width=".7"/><path d="M423 255l3 3M427 253l3 4" stroke="#888" stroke-width=".7"/>
<g fill="none" stroke="#222" stroke-width="1"><path d="M943 438v11l8-3M943 449l8 3M942 435h3l-3 3h3M952 443l1.500 2 1.500-3M948 450l4 4M952 450l-4 4"/><path d="M951 459l7-6-3 8z" fill="#222"/></g>
</svg>`);
</script>
</body>
</html>
